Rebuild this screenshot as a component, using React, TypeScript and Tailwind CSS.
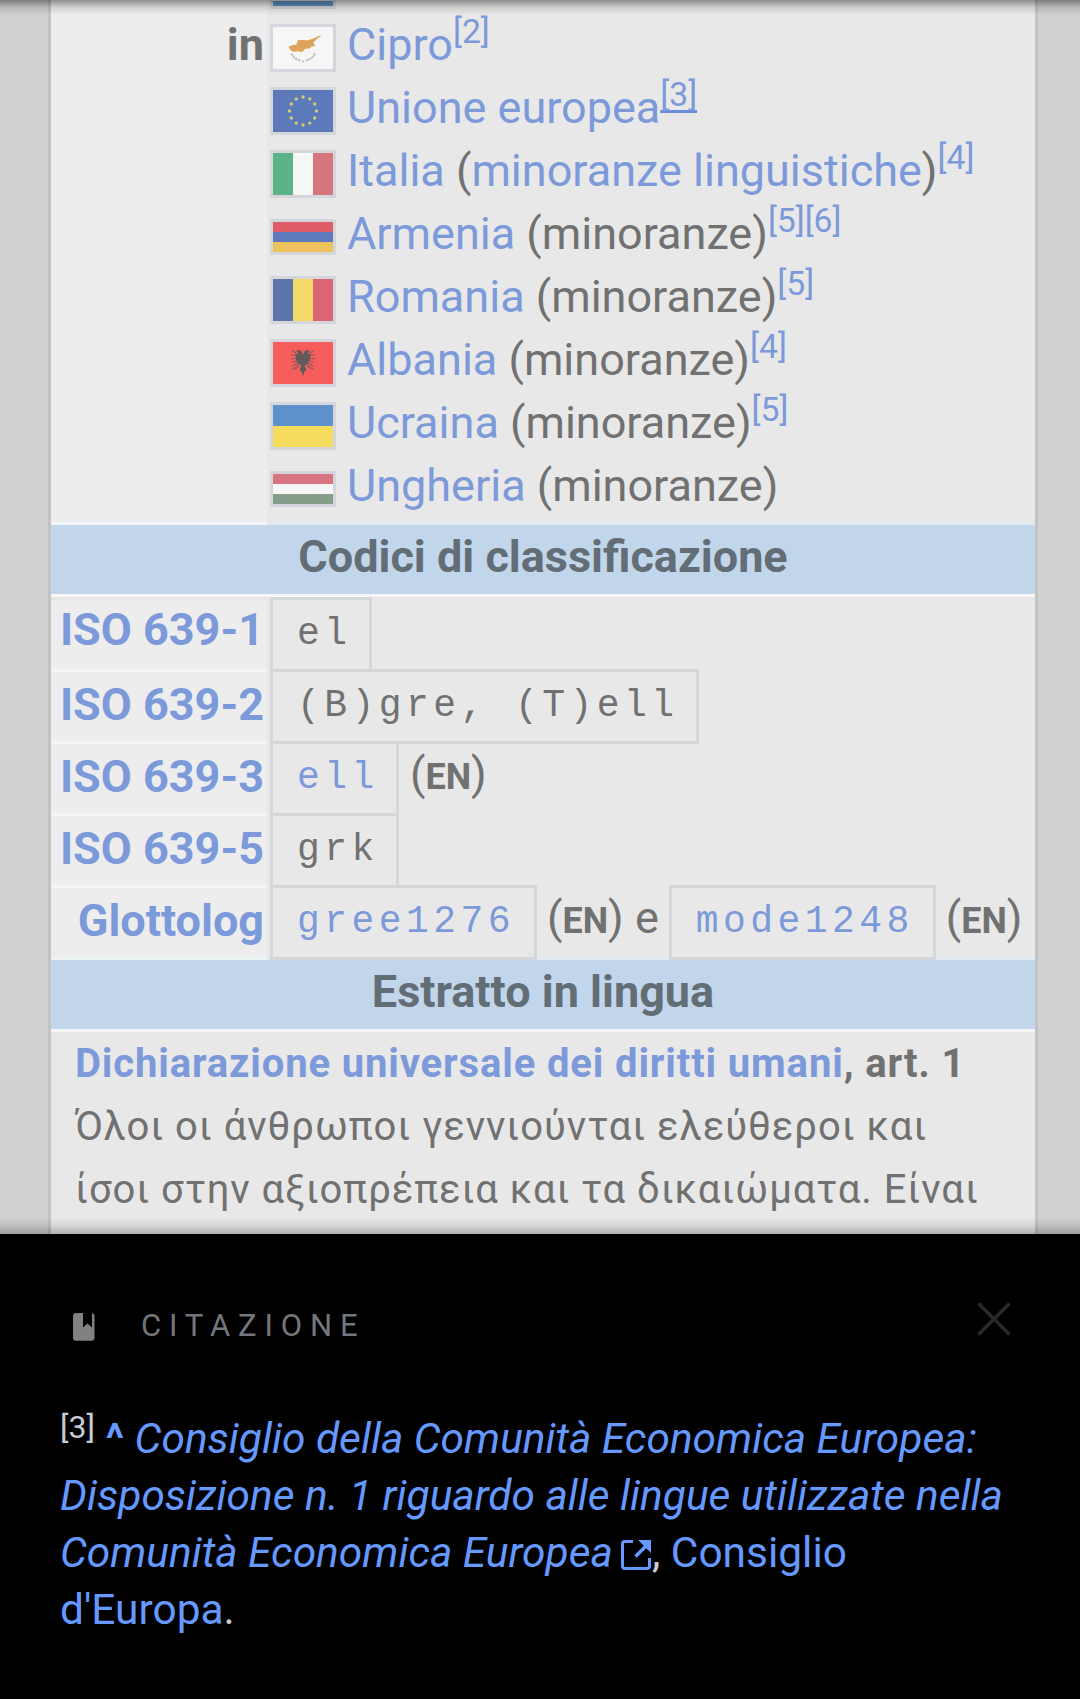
import React from "react";

const Link = ({ children }: { children: React.ReactNode }) => (
  <a className="text-[#7c99da]">{children}</a>
);

const Ref = ({ n, underline = false }: { n: string; underline?: boolean }) => (
  <span
    className={
      underline
        ? "relative -top-[17px] text-[33.700px] leading-none text-[#7c99da] underline decoration-[#6a8cdb] decoration-3 underline-offset-[4px] [text-decoration-skip-ink:none]"
        : "relative -top-[17px] text-[33.700px] leading-none text-[#7c99da]"
    }
  >
    {n}
  </span>
);

const Flag = ({ short = false, children }: { short?: boolean; children: React.ReactNode }) => (
  <span
    className={
      short
        ? "mt-[7px] block h-9 w-[66px] shrink-0 border-3 border-[#d5d6db]"
        : "mt-[7px] block h-12 w-[66px] shrink-0 border-3 border-[#d5d6db]"
    }
  >
    {children}
  </span>
);

const Horizontal = ({ colors }: { colors: string[] }) => (
  <span className="flex h-full w-full flex-col">
    {colors.map((c, i) => (
      <span key={i} className="flex-1" style={{ backgroundColor: c }} />
    ))}
  </span>
);

const Vertical = ({ colors }: { colors: string[] }) => (
  <span className="flex h-full w-full">
    {colors.map((c, i) => (
      <span key={i} className="flex-1" style={{ backgroundColor: c }} />
    ))}
  </span>
);

const Cyprus = () => (
  <svg viewBox="0 0 60 42" className="block h-full w-full">
    <rect width="60" height="42" fill="#f6f6f6" />
    <path
      d="M15.500 19.500c1.500 0 2.500-1 4-1.500l4-.6 1.500-4.400h5l5 .2 6.500-2.200 7.500-3.500-5 4.500-3.500 3.500.8 2.500 1.500 1-4 .4-2.500 2.200-4 .2-3 3.200-5.500-.8-2.500.8-3.500-1.600z"
      fill="#dfa45c"
    />
    <path d="M18.500 26.500Q21 32.500 27.500 33.500" fill="none" stroke="#c0c4b6" strokeWidth="2" strokeDasharray="2.500 .6" />
    <path d="M42 26.500Q39 32.500 32.500 33.500" fill="none" stroke="#c0c4b6" strokeWidth="2" strokeDasharray="2.500 .6" />
    <circle cx="30" cy="34.500" r="1" fill="#b9bdac" />
  </svg>
);

const Europe = () => (
  <svg viewBox="0 0 60 42" className="block h-full w-full">
    <rect width="60" height="42" fill="#5c7ab9" />
    {Array.from({ length: 12 }, (_, i) => {
      const a = (i * Math.PI) / 6;
      return <circle key={i} cx={30 + 13.500 * Math.sin(a)} cy={21 - 14 * Math.cos(a)} r="1.700" fill="#d6cb72" />;
    })}
  </svg>
);

const Albania = () => (
  <svg viewBox="0 0 60 42" className="block h-full w-full">
    <rect width="60" height="42" fill="#f85d5d" />
    <g fill="#5f5b5b">
      <path d="M29.800 12.500l-1.500-3.500-2.800-1.200-2.800 1.500 2 .5.500 2.500-3-1.500 1 7 2.500 4 2.500 2-1.500 4 2 2.500 1.300 4 1.300-4 2-2.500-1.500-4 2.500-2 2.500-4 1-7-3 1.500.500-2.500 2-.5-2.800-1.500-2.800 1.200-1.500 3.500z" />
      <path
        d="M23 11l-4-2.500M23 14l-5-1.500M23 16.500l-5 .2M24 18.500l-5 2M25 20l-5 4.500M26 21l-3.500 6M26 24l-7 3.500M37 11l4-2.500M37 14l5-1.500M37 16.500l5 .2M36 18.500l5 2M35 20l5 4.500M34 21l3.500 6M34 24l7 3.500"
        stroke="#5f5b5b"
        strokeWidth="1.200"
        opacity=".65"
      />
    </g>
  </svg>
);

const Country = ({ flag, children }: { flag: React.ReactNode; children: React.ReactNode }) => (
  <div className="flex h-[63px] items-center whitespace-nowrap">
    {flag}
    <span className="ml-[11px] leading-[63px]">{children}</span>
  </div>
);

const Header = ({ children }: { children: React.ReactNode }) => (
  <div className="box-content h-[69px] border-b-3 border-[#f6f6f6] bg-[#c2d6eb] text-center text-[45px] font-bold leading-[63px] text-[#636d75]">
    {children}
  </div>
);

const Code = ({ link = false, width, children }: { link?: boolean; width: string; children: React.ReactNode }) => (
  <span
    className={`${width} ${link ? "text-[#7c99da]" : "text-[#717171]"} -mt-[3px] block h-[75px] shrink-0 whitespace-pre border-3 border-[#d5d6da] pl-[24px] font-['Liberation_Mono',monospace] text-[38px] leading-[68px] tracking-[4.450px]`}
  >
    {children}
  </span>
);

const CodeRow = ({
  label,
  first = false,
  last = false,
  children,
}: {
  label: string;
  first?: boolean;
  last?: boolean;
  children: React.ReactNode;
}) => (
  <div className="flex h-[72px]">
    <div
      className={`w-[216px] shrink-0 border-b-3 bg-[#ededed] pr-[3px] text-right text-[45px] font-bold text-[#7c99da] ${last ? "border-[#eef3f6]" : "border-[#f6f6f6]"} ${first ? "leading-[60px]" : "leading-[66px]"}`}
    >
      {label}
    </div>
    <div
      className={`flex w-[768px] shrink-0 whitespace-nowrap pl-[3px] text-[45px] leading-[59px] ${last ? "border-b-3 border-[#e1e9f1]" : ""}`}
    >
      {children}
    </div>
  </div>
);

const En = () => (
  <span>
    (<b className="text-[36px] leading-none">EN</b>)
  </span>
);

export default function App() {
  return (
    <div className="flex h-[1699px] w-[1080px] flex-col overflow-hidden bg-black font-['Roboto',sans-serif] text-[#717171]">
      <div className="relative h-[1234px] overflow-hidden bg-[#d0d0d0]">
        <div className="ml-[48px] h-full w-[990px] border-x-3 border-[#c3c3c3] bg-[#e8e8e8]">
          <div className="flex h-[525px]">
            <div className="w-[216px] shrink-0 border-b-3 border-[#f2f4f6] bg-[#ededed] pr-[3px] pt-[13px] text-right text-[45px] font-bold leading-[63px]">
              in
            </div>
            <div className="w-[768px] shrink-0 border-b-3 border-[#e1e9f1] pl-[3px] text-[45px]">
              <div className="h-[13px]">
                <div className="h-[9px] w-[66px] border-x-3 border-b-3 border-[#d5d6db]">
                  <div className="h-px bg-[#dfe5ea]" />
                  <div className="h-[5px] bg-[#5c90c1]" />
                </div>
              </div>
              <Country flag={<Flag><Cyprus /></Flag>}>
                <Link>Cipro</Link>
                <Ref n="[2]" />
              </Country>
              <Country flag={<Flag><Europe /></Flag>}>
                <Link>Unione europea</Link>
                <Ref n="[3]" underline />
              </Country>
              <Country flag={<Flag><Vertical colors={["#5db388", "#f5f6f5", "#d7757d"]} /></Flag>}>
                <Link>Italia</Link> (<Link>minoranze linguistiche</Link>)<Ref n="[4]" />
              </Country>
              <Country flag={<Flag short><Horizontal colors={["#df5d68", "#5c7abd", "#edc25c"]} /></Flag>}>
                <Link>Armenia</Link> (minoranze)
                <Ref n="[5][6]" />
              </Country>
              <Country flag={<Flag><Vertical colors={["#5c76a9", "#f4d96b", "#da6573"]} /></Flag>}>
                <Link>Romania</Link> (minoranze)
                <Ref n="[5]" />
              </Country>
              <Country flag={<Flag><Albania /></Flag>}>
                <Link>Albania</Link> (minoranze)
                <Ref n="[4]" />
              </Country>
              <Country flag={<Flag><Horizontal colors={["#5c91cc", "#f6dc5c"]} /></Flag>}>
                <Link>Ucraina</Link> (minoranze)
                <Ref n="[5]" />
              </Country>
              <Country flag={<Flag short><Horizontal colors={["#d97580", "#f6f6f6", "#849e89"]} /></Flag>}>
                <Link>Ungheria</Link> (minoranze)
              </Country>
            </div>
          </div>

          <Header>Codici di classificazione</Header>

          <div className="h-[363px] pt-[3px]">
            <CodeRow label="ISO 639-1" first>
              <Code width="w-[102px]">el</Code>
            </CodeRow>
            <CodeRow label="ISO 639-2">
              <Code width="w-[429px]">(B)gre, (T)ell</Code>
            </CodeRow>
            <CodeRow label="ISO 639-3">
              <Code link width="w-[129px]">ell</Code>
              <span className="ml-[11px]"><En /></span>
            </CodeRow>
            <CodeRow label="ISO 639-5">
              <Code width="w-[129px]">grk</Code>
            </CodeRow>
            <CodeRow label="Glottolog" last>
              <Code link width="w-[267px]">gree1276</Code>
              <span className="ml-[10px]"><En /> e</span>
              <span className="w-[10px]" />
              <Code link width="w-[267px]">mode1248</Code>
              <span className="ml-[10px]"><En /></span>
            </CodeRow>
          </div>

          <Header>Estratto in lingua</Header>

          <div className="whitespace-nowrap pl-[24px] text-[40px] leading-[63px]">
            <div className="font-bold tracking-[.86px]">
              <Link>Dichiarazione universale dei diritti umani</Link>, art. 1
            </div>
            <div className="tracking-[.95px]">Όλοι οι άνθρωποι γεννιούνται ελεύθεροι και</div>
            <div className="tracking-[.95px]">ίσοι στην αξιοπρέπεια και τα δικαιώματα. Είναι</div>
          </div>
        </div>
        <div className="absolute inset-x-0 top-0 h-[15px] bg-gradient-to-b from-black/40 via-black/12 to-transparent" />
        <div className="absolute inset-x-0 bottom-0 h-[17px] bg-gradient-to-t from-black/24 via-black/8 to-transparent" />
      </div>

      <div className="flex-1 bg-black">
        <div className="flex h-[160px] items-start">
          <svg viewBox="0 0 22 28" className="ml-[73px] mt-[79px] h-7 w-[22px]">
            <path
              d="M3 0h7v14.500l4.500-4 4.500 4V.3c1.500.2 2.500 1.200 2.500 2.700v22c0 1.700-1.300 2.700-3 2.700H3c-1.700 0-3-1-3-2.700V3c0-1.700 1.300-3 3-3z"
              fill="#818181"
            />
          </svg>
          <span className="ml-[46px] mt-[74px] text-[31px] leading-9 tracking-[7.850px] text-[#72777d]">CITAZIONE</span>
          <svg viewBox="0 0 34 34" className="ml-auto mr-[69px] mt-[68px] h-[34px] w-[34px]">
            <path d="M1.500 1.500l31 31M32.500 1.500l-31 31" stroke="#27292d" strokeWidth="3.600" />
          </svg>
        </div>
        <div className="whitespace-nowrap pl-[60px] pt-[16px] text-[42.450px] leading-[57px] text-[#6699ff]">
          <div>
            <span className="relative -top-[15px] text-[32px] leading-none text-[#c8ccd1]">[3]</span>{" "}
            <b>^</b> <i>Consiglio della Comunità Economica Europea:</i>
          </div>
          <div>
            <i>Disposizione n. 1 riguardo alle lingue utilizzate nella</i>
          </div>
          <div>
            <i>Comunità Economica Europea</i>
            <svg viewBox="0 0 30 30" className="ml-[8px] mr-px inline-block h-[30px] w-[30px] align-[-3px]">
              <path d="M12 1.500H4Q1.500 1.500 1.500 4v22q0 2.500 2.500 2.500h22q2.500 0 2.500-2.500v-8" fill="none" stroke="#6699ff" strokeWidth="3" />
              <path d="M17 0h13v13l-4.800-4.800-9.500 9.500-2.400-2.400 9.500-9.500z" fill="#6699ff" />
            </svg>
            <span className="text-[#c8ccd1]">,</span> Consiglio
          </div>
          <div>
            d'Europa<span className="text-[#c8ccd1]">.</span>
          </div>
        </div>
      </div>
    </div>
  );
}
